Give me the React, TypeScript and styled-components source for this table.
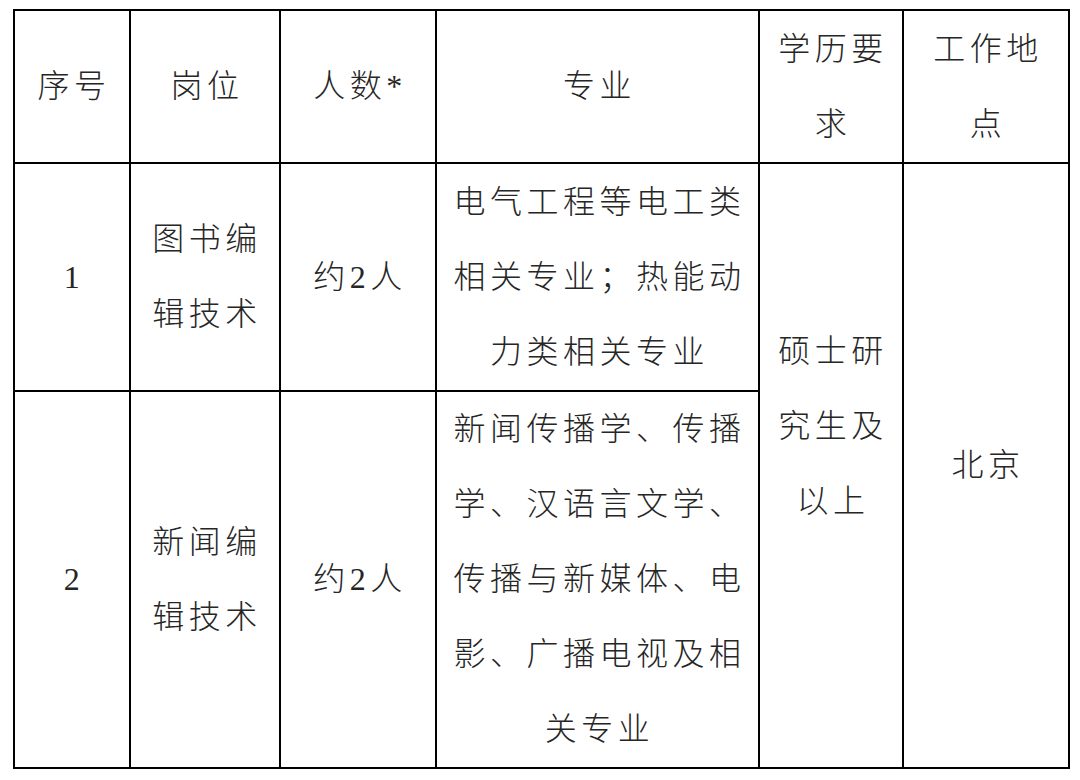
import React from "react"
import styled, { createGlobalStyle } from "styled-components"

const GlobalStyle = createGlobalStyle`
  body {
    margin: 0;
    background: #fff;
  }
`

const rows = [
  {
    no: "1",
    post: "图书编辑技术",
    count: "约2人",
    major: "电气工程等电工类相关专业；热能动力类相关专业",
  },
  {
    no: "2",
    post: "新闻编辑技术",
    count: "约2人",
    major: "新闻传播学、传播学、汉语言文学、传播与新媒体、电影、广播电视及相关专业",
  },
]

const App = () => {
  return (
    <Page>
      <GlobalStyle />
      <Table>
        <colgroup>
          <col style={{ width: 116 }} />
          <col style={{ width: 150 }} />
          <col style={{ width: 156 }} />
          <col style={{ width: 323 }} />
          <col style={{ width: 144 }} />
          <col style={{ width: 166 }} />
        </colgroup>
        <tbody>
          <HeadRow>
            <Cell>序号</Cell>
            <Cell>岗位</Cell>
            <Cell>人数*</Cell>
            <Cell>专业</Cell>
            <Cell>学历要求</Cell>
            <Cell>工作地点</Cell>
          </HeadRow>
          {rows.map((r, i) => (
            <BodyRow key={r.no} $tall={i === 1}>
              <Cell>{r.no}</Cell>
              <Cell>{r.post}</Cell>
              <Cell>{r.count}</Cell>
              <Cell>{r.major}</Cell>
              {i === 0 && (
                <>
                  <Cell rowSpan={2} $lift>
                    硕士研究生及以上
                  </Cell>
                  <Cell rowSpan={2}>北京</Cell>
                </>
              )}
            </BodyRow>
          ))}
        </tbody>
      </Table>
    </Page>
  )
}

const Page = styled.div`
  padding: 9px 0 0 13px;
`

const Table = styled.table`
  border-collapse: collapse;
  table-layout: fixed;
  width: 1057px;
  color: #262626;
  font-family: "Liberation Serif", "Noto Sans CJK SC", serif;
  font-size: 32px;
  font-weight: 300;
`

const HeadRow = styled.tr`
  height: 153px;
`

const BodyRow = styled.tr<{ $tall: boolean }>`
  height: ${(p) => (p.$tall ? "377px" : "228px")};
`

const Cell = styled.td<{ $lift?: boolean }>`
  border: 2px solid #000;
  padding: 0 10px ${(p) => (p.$lift ? "78px" : "0")} 14px;
  text-align: center;
  vertical-align: middle;
  line-height: 75px;
  letter-spacing: 4.5px;
`

export default App
